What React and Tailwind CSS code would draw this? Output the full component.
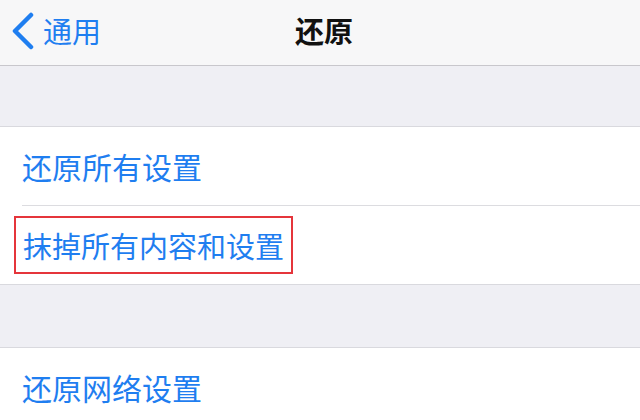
const FONT = { fontFamily: '"Noto Sans CJK SC", "Noto Sans", sans-serif' };

function NavBar() {
  return (
    <div className="relative flex h-[66px] items-center border-b border-[#c8c7cc] bg-[#f7f7f8]">
      <div className="flex items-center pl-[10px]">
        <svg width="25" height="38" viewBox="0 0 25 38" className="mt-[-4px]">
          <path d="M21 3 L5 19 L21 35" fill="none" stroke="#1f7ef0" strokeWidth="4.5" strokeLinecap="round" strokeLinejoin="round" />
        </svg>
        <span className="ml-[8px] text-[29px] leading-none text-[#1f7ef0] mt-[-5px]">通用</span>
      </div>
      <div className="absolute left-1/2 top-0 flex h-full -translate-x-[25px] items-center">
        <span className="text-[29px] font-semibold leading-none text-[#111] mt-[-5px]">还原</span>
      </div>
    </div>
  );
}

export default function App() {
  return (
    <div className="h-[420px] w-[640px] overflow-hidden bg-[#efeff4]" style={FONT}>
      <NavBar />
      <div className="h-[60px]" />
      <div className="border-y border-[#d9d9de] bg-white">
        <div className="flex h-[78px] items-center pl-[22px]">
          <span className="text-[30px] leading-none text-[#1f7ef0]">还原所有设置</span>
        </div>
        <div className="ml-[22px] border-t border-[#dcdce0]" />
        <div className="flex h-[78px] items-center pl-[14px]">
          <span className="flex h-[58px] items-center border-2 border-[#e5353b] px-[7px] text-[29px] leading-none text-[#1f7ef0]">
            抹掉所有内容和设置
          </span>
        </div>
      </div>
      <div className="h-[62px]" />
      <div className="border-t border-[#d9d9de] bg-white">
        <div className="flex h-[78px] items-center pl-[22px]">
          <span className="text-[30px] leading-none text-[#1f7ef0]">还原网络设置</span>
        </div>
      </div>
    </div>
  );
}
